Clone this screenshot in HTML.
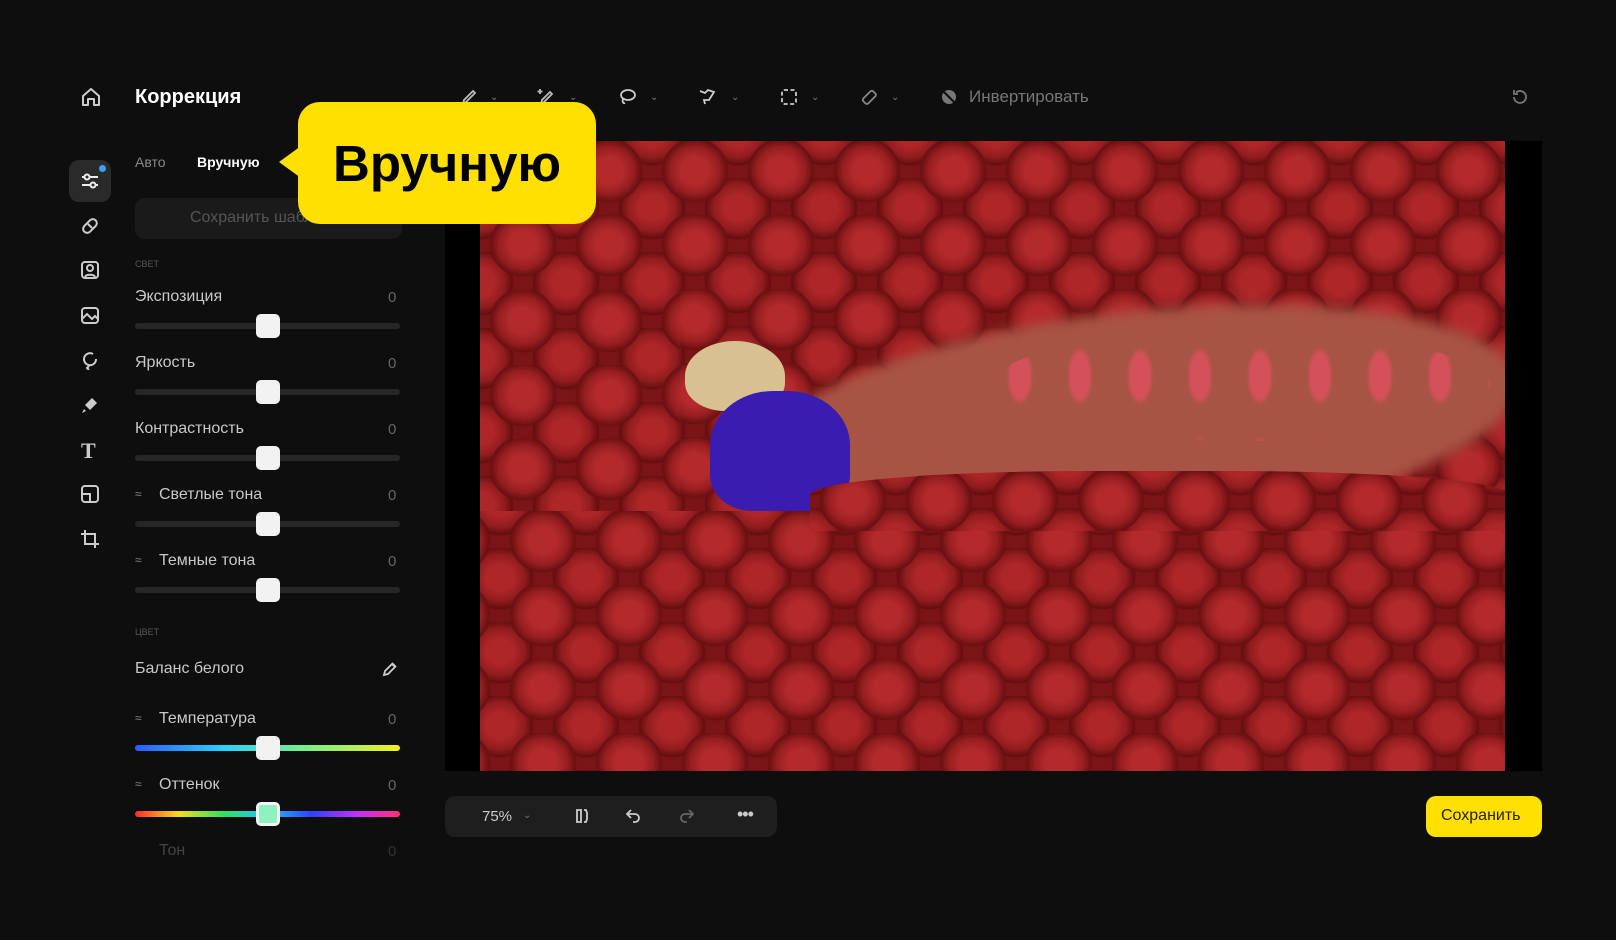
<!DOCTYPE html>
<html><head><meta charset="utf-8"><style>
*{margin:0;padding:0;box-sizing:border-box}
body{width:1616px;height:940px;background:#0e0e0e;font-family:"Liberation Sans","DejaVu Sans",sans-serif;color:#ddd;position:relative;overflow:hidden}
.a{position:absolute}
.lbl{position:absolute;left:135px;font-size:16px;color:#c8c8c8}
.val{position:absolute;left:388px;font-size:15px;color:#666}
.trk{position:absolute;left:135px;width:265px;height:6px;border-radius:3px;background:#262626}
.th{position:absolute;left:256px;width:24px;height:24px;border-radius:5px;background:#f2f2f2}
.chev{position:absolute;font-size:10px;color:#777}
svg{display:block}
.fl{background:radial-gradient(ellipse 52% 58% at 50% 40%,#b42a2c 0 30%,#961e20 55%,#6a1012 72%,transparent 76%) 0 0/86px 74px,radial-gradient(ellipse 52% 58% at 50% 40%,#ae2628 0 30%,#901c1e 55%,#640e10 72%,transparent 76%) 43px 37px/86px 74px,#7a1416}
</style></head><body>
<svg class="a" style="left:80px;top:86px" width="22" height="22" viewBox="0 0 22 22" fill="none" stroke="#ccc" stroke-width="2" stroke-linejoin="round"><path d="M3 10L11 3l8 7v9h-5v-6H8v6H3z"/></svg>
<div class="a" style="left:69px;top:160px;width:42px;height:42px;border-radius:10px;background:#2a2a2a"></div>
<div class="a" style="left:99px;top:165px;width:7px;height:7px;border-radius:50%;background:#3aa0ff"></div>
<svg class="a" style="left:80px;top:171px" width="20" height="20" viewBox="0 0 20 20" fill="none" stroke="#eee" stroke-width="2"><path d="M2 6h16M2 14h16"/><circle cx="7" cy="6" r="2.5" fill="#2a2a2a"/><circle cx="13" cy="14" r="2.5" fill="#2a2a2a"/></svg>
<svg class="a" style="left:80px;top:216px" width="20" height="20" viewBox="0 0 20 20" fill="none" stroke="#ccc" stroke-width="2"><rect x="2" y="6" width="16" height="8" rx="4" transform="rotate(-45 10 10)"/><path d="M8 8l4 4"/></svg>
<svg class="a" style="left:80px;top:260px" width="20" height="20" viewBox="0 0 20 20" fill="none" stroke="#ccc" stroke-width="2"><rect x="2" y="2" width="16" height="16" rx="3"/><circle cx="10" cy="8" r="3"/><path d="M5 17c1-3 9-3 10 0"/></svg>
<svg class="a" style="left:80px;top:305px" width="20" height="20" viewBox="0 0 20 20" fill="none" stroke="#ccc" stroke-width="2"><rect x="2" y="3" width="16" height="15" rx="3"/><path d="M2 14l5-5 5 5 3-3 3 3"/></svg>
<svg class="a" style="left:80px;top:350px" width="20" height="20" viewBox="0 0 20 20" fill="none" stroke="#ccc" stroke-width="2"><path d="M16 9a6 6 0 1 1-3-5M9 16l-2 2 2 2"/></svg>
<svg class="a" style="left:80px;top:395px" width="20" height="20" viewBox="0 0 20 20" fill="#ccc"><path d="M12 3l5 5-7 7-5-5z"/><path d="M4 14l2 2-4 2z"/></svg>
<div class="a" style="left:81px;top:438px;font-size:22px;font-weight:bold;color:#ccc;font-family:'Liberation Serif',serif">T</div>
<svg class="a" style="left:80px;top:484px" width="20" height="20" viewBox="0 0 20 20" fill="none" stroke="#ccc" stroke-width="2"><rect x="2" y="2" width="16" height="16" rx="3"/><path d="M2 10h8v8"/></svg>
<svg class="a" style="left:80px;top:529px" width="20" height="20" viewBox="0 0 20 20" fill="none" stroke="#ccc" stroke-width="2"><path d="M5 1v14h14M1 5h14v14"/></svg>

<div class="a" style="left:135px;top:86px;font-size:20px;font-weight:bold;color:#fff">Коррекция</div>
<div class="a" style="left:135px;top:154px;font-size:14px;color:#888">Авто</div>
<div class="a" style="left:197px;top:154px;font-size:14px;font-weight:bold;color:#fff">Вручную</div>
<div class="a" style="left:135px;top:198px;width:267px;height:41px;border-radius:10px;background:#1a1a1a"></div>
<div class="a" style="left:190px;top:209px;font-size:16px;color:#555">Сохранить шаблон</div>
<div class="a" style="left:135px;top:259px;font-size:9px;color:#555">СВЕТ</div>

<div class="lbl" style="top:288px">Экспозиция</div><div class="val" style="top:289px">0</div><div class="trk" style="top:323px"></div><div class="th" style="top:314px"></div>
<div class="lbl" style="top:354px">Яркость</div><div class="val" style="top:355px">0</div><div class="trk" style="top:389px"></div><div class="th" style="top:380px"></div>
<div class="lbl" style="top:420px">Контрастность</div><div class="val" style="top:421px">0</div><div class="trk" style="top:455px"></div><div class="th" style="top:446px"></div>
<div class="lbl" style="top:486px;left:159px">Светлые тона</div><div class="a" style="left:135px;top:487px;font-size:12px;color:#888">≈</div><div class="val" style="top:487px">0</div><div class="trk" style="top:521px"></div><div class="th" style="top:512px"></div>
<div class="lbl" style="top:552px;left:159px">Темные тона</div><div class="a" style="left:135px;top:553px;font-size:12px;color:#888">≈</div><div class="val" style="top:553px">0</div><div class="trk" style="top:587px"></div><div class="th" style="top:578px"></div>

<div class="a" style="left:135px;top:627px;font-size:9px;color:#555">ЦВЕТ</div>
<div class="lbl" style="top:660px">Баланс белого</div>
<svg class="a" style="left:381px;top:660px" width="18" height="18" viewBox="0 0 18 18" fill="none" stroke="#ccc" stroke-width="1.8"><path d="M11 3l4 4M3 15l1-4 7-7 3 3-7 7z"/></svg>
<div class="lbl" style="top:710px;left:159px">Температура</div><div class="a" style="left:135px;top:711px;font-size:12px;color:#888">≈</div><div class="val" style="top:711px">0</div>
<div class="trk" style="top:745px;background:linear-gradient(90deg,#2a5cff,#2ad0ff,#7ff07f,#f0f020)"></div><div class="th" style="top:736px"></div>
<div class="lbl" style="top:776px;left:159px">Оттенок</div><div class="a" style="left:135px;top:777px;font-size:12px;color:#888">≈</div><div class="val" style="top:777px">0</div>
<div class="trk" style="top:811px;background:linear-gradient(90deg,#ff2a2a,#f0e020,#30e060,#20c0ff,#3040ff,#c030ff,#ff3070)"></div><div class="th" style="top:802px;background:#8ff0c0;border:3px solid #f2f2f2"></div>
<div class="lbl" style="top:842px;left:159px;color:#444">Тон</div><div class="val" style="top:843px;color:#333">0</div>

<svg class="a" style="left:459px;top:87px" width="20" height="20" viewBox="0 0 20 20" fill="none" stroke="#bbb" stroke-width="1.8"><path d="M4 17l1-4 9-9 2 2-9 9z"/></svg><div class="chev" style="left:490px;top:92px">⌄</div>
<svg class="a" style="left:536px;top:87px" width="20" height="20" viewBox="0 0 20 20" fill="none" stroke="#bbb" stroke-width="1.8"><path d="M5 17l1-4 8-8 2 2-8 8zM4 2v5M1.5 4.5h5"/></svg><div class="chev" style="left:569px;top:92px">⌄</div>
<svg class="a" style="left:617px;top:87px" width="20" height="20" viewBox="0 0 20 20" fill="none" stroke="#ccc" stroke-width="1.8"><ellipse cx="11" cy="8" rx="7" ry="5"/><path d="M6 12c-1 2 0 5 2 4"/></svg><div class="chev" style="left:650px;top:92px">⌄</div>
<svg class="a" style="left:697px;top:87px" width="20" height="20" viewBox="0 0 20 20" fill="none" stroke="#ccc" stroke-width="1.8"><path d="M3 4l5 2 3-3 6 2-5 8-5 0 1 4"/></svg><div class="chev" style="left:731px;top:92px">⌄</div>
<svg class="a" style="left:779px;top:87px" width="20" height="20" viewBox="0 0 20 20" fill="none" stroke="#ccc" stroke-width="1.8" stroke-dasharray="4 2.5"><rect x="3" y="3" width="14" height="14" rx="2"/></svg><div class="chev" style="left:811px;top:92px">⌄</div>
<svg class="a" style="left:859px;top:87px" width="20" height="20" viewBox="0 0 20 20" fill="none" stroke="#888" stroke-width="1.8"><rect x="3" y="7" width="14" height="7" rx="2" transform="rotate(-45 10 10)"/></svg><div class="chev" style="left:891px;top:92px">⌄</div>
<svg class="a" style="left:940px;top:88px" width="18" height="18" viewBox="0 0 18 18"><circle cx="9" cy="9" r="7" fill="#777"/><path d="M3 3l12 12" stroke="#0e0e0e" stroke-width="2"/></svg>
<div class="a" style="left:969px;top:87px;font-size:17px;color:#777">Инвертировать</div>
<svg class="a" style="left:1510px;top:87px" width="20" height="20" viewBox="0 0 20 20" fill="none" stroke="#777" stroke-width="1.8"><path d="M4 10a6 6 0 1 0 2-4.5M4 3v4h4"/></svg>

<div class="a" style="left:445px;top:141px;width:1097px;height:630px;background:#000"></div>
<div class="a fl" style="left:480px;top:141px;width:1025px;height:630px;overflow:hidden">
 <div class="a" style="left:280px;top:170px;width:760px;height:220px;border-radius:50%;background:#a85444;transform:rotate(-6deg);filter:blur(6px)"></div>
 <div class="a fl" style="left:0;top:0;width:1025px;height:150px"></div>
 <div class="a" style="left:510px;top:190px;width:500px;height:110px;border-radius:50%;background:radial-gradient(ellipse 40% 60% at 50% 50%,#e05060 0 40%,transparent 55%) 0 0/60px 90px;opacity:.8"></div>
 <div class="a" style="left:205px;top:200px;width:100px;height:70px;border-radius:50% 50% 40% 40%;background:#d8c090"></div>
 <div class="a" style="left:230px;top:250px;width:140px;height:120px;border-radius:45% 45% 30% 30%;background:#3a1cb0"></div>
 <div class="a fl" style="left:0;top:370px;width:1025px;height:260px;background-position:20px 0,63px 37px"></div>
 <div class="a fl" style="left:0;top:150px;width:200px;height:220px"></div>
 <div class="a fl" style="left:330px;top:330px;width:700px;height:60px;border-radius:40% 40% 0 0"></div>
</div>

<div class="a" style="left:445px;top:796px;width:332px;height:41px;border-radius:10px;background:#1e1e1e"></div>
<div class="a" style="left:482px;top:808px;font-size:15px;color:#ccc">75%</div><div class="chev" style="left:523px;top:810px">⌄</div>
<svg class="a" style="left:572px;top:806px" width="20" height="20" viewBox="0 0 20 20" fill="none" stroke="#ccc" stroke-width="1.8"><path d="M9 3v14M8 4H5v12h3M12 4h2l1 3v6l-1 3h-2"/></svg>
<svg class="a" style="left:624px;top:806px" width="20" height="20" viewBox="0 0 20 20" fill="none" stroke="#ccc" stroke-width="1.8"><path d="M7 4L3 8l4 4M3 8h8a4 4 0 0 1 0 8H9"/></svg>
<svg class="a" style="left:676px;top:806px" width="20" height="20" viewBox="0 0 20 20" fill="none" stroke="#666" stroke-width="1.8"><path d="M13 4l4 4-4 4M17 8H9a4 4 0 0 0 0 8h2"/></svg>
<div class="a" style="left:737px;top:804px;font-size:18px;color:#ccc;letter-spacing:-1px">•••</div>
<div class="a" style="left:1426px;top:796px;width:116px;height:41px;border-radius:10px;background:#ffe000"></div>
<div class="a" style="left:1441px;top:807px;font-size:16px;color:#222">Сохранить</div>

<div class="a" style="left:298px;top:102px;width:298px;height:122px;border-radius:22px;background:#ffe000"></div>
<div class="a" style="left:279px;top:146px;width:0;height:0;border-top:16px solid transparent;border-bottom:16px solid transparent;border-right:22px solid #ffe000"></div>
<div class="a" style="left:333px;top:134px;font-size:51px;font-weight:bold;color:#000">Вручную</div>
</body></html>
